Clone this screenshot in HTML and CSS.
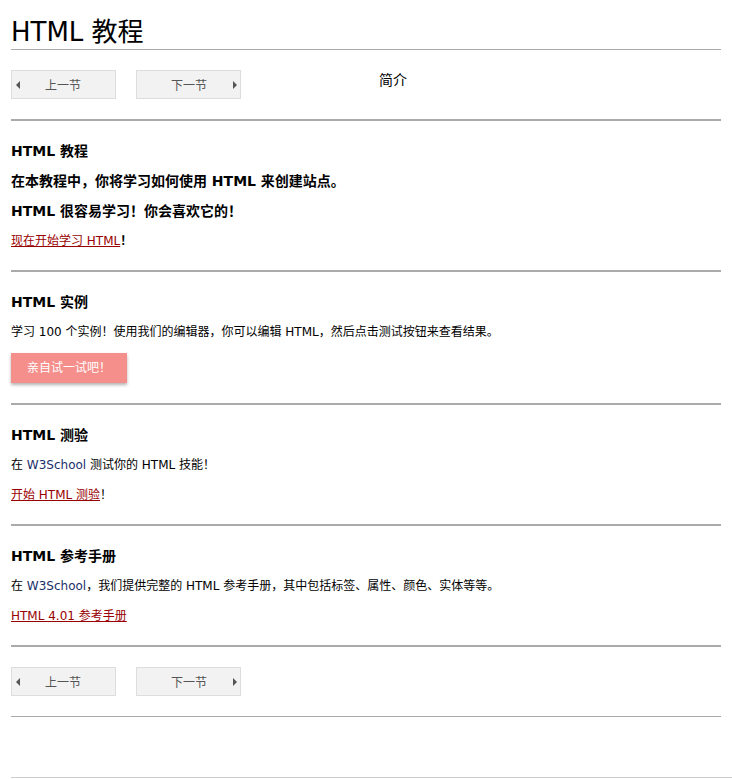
FILE: index.html
```html
<!DOCTYPE html>
<html lang="zh-CN">
<head>
<meta charset="utf-8">
<title>HTML 教程</title>
<link rel="stylesheet" href="styles.css">
</head>
<body>
<div class="page">
  <h1 class="title">HTML 教程</h1>

  <div class="nav">
    <a class="navbtn prev" href="#"><span class="tri tri-left"></span><span class="navtext">上一节</span></a>
    <a class="navbtn next" href="#"><span class="navtext">下一节</span><span class="tri tri-right"></span></a>
    <span class="intro">简介</span>
  </div>

  <hr class="rule">

  <div class="section">
    <h2 class="sect-title">HTML 教程</h2>
    <p class="strong">在本教程中，你将学习如何使用 HTML 来创建站点。</p>
    <p class="strong">HTML 很容易学习！你会喜欢它的！</p>
    <p><a class="link" href="#">现在开始学习 HTML</a><b>！</b></p>
  </div>

  <hr class="rule">

  <div class="section">
    <h2 class="sect-title">HTML 实例</h2>
    <p>学习 100 个实例！使用我们的编辑器，你可以编辑 HTML，然后点击测试按钮来查看结果。</p>
    <div><a class="tryit" href="#">亲自试一试吧！</a></div>
  </div>

  <hr class="rule">

  <div class="section">
    <h2 class="sect-title">HTML 测验</h2>
    <p>在 <span class="w3">W3School</span> 测试你的 HTML 技能！</p>
    <p><a class="link" href="#">开始 HTML 测验</a>！</p>
  </div>

  <hr class="rule">

  <div class="section">
    <h2 class="sect-title">HTML 参考手册</h2>
    <p>在 <span class="w3">W3School</span>，我们提供完整的 HTML 参考手册，其中包括标签、属性、颜色、实体等等。</p>
    <p><a class="link" href="#">HTML 4.01 参考手册</a></p>
  </div>

  <hr class="rule">

  <div class="nav nav-bottom">
    <a class="navbtn prev" href="#"><span class="tri tri-left"></span><span class="navtext">上一节</span></a>
    <a class="navbtn next" href="#"><span class="navtext">下一节</span><span class="tri tri-right"></span></a>
  </div>

  <hr class="rule thin">
</div>
<div class="footer"></div>
</body>
</html>
```

FILE: styles.css
```css
html, body {
  margin: 0;
  padding: 0;
  background: #fff;
}

body {
  font-family: "DejaVu Sans", Verdana, "Noto Sans CJK SC", sans-serif;
  font-size: 12px;
  color: #000;
}

.page {
  width: 710px;
  padding: 0 11px;
}

.title {
  margin: 17px 0 0;
  padding: 0 0 2px;
  font-size: 26px;
  font-weight: normal;
  line-height: 30px;
  border-bottom: 1px solid #aaa;
}

.nav {
  display: flex;
  align-items: center;
  margin: 20px 0;
}

.navbtn {
  position: relative;
  box-sizing: border-box;
  width: 105px;
  height: 29px;
  background: #f2f2f2;
  border: 1px solid #ddd;
  color: #555;
  text-decoration: none;
  display: flex;
  align-items: center;
}

.navbtn.next {
  margin-left: 20px;
}

.prev .navtext {
  margin-left: 25px;
}

.next .navtext {
  margin-left: 34px;
}

.tri {
  width: 0;
  height: 0;
  border-top: 4px solid transparent;
  border-bottom: 4px solid transparent;
}

.tri-left {
  margin-left: 4px;
  border-right: 4px solid #555;
}

.tri-right {
  margin-left: 26px;
  border-left: 4px solid #555;
}

.intro {
  margin-left: 138px;
  align-self: flex-start;
  margin-top: 1px;
  font-size: 14px;
  line-height: 18px;
}

.rule {
  margin: 0;
  border: 0;
  height: 2px;
  background: #aaa;
}

.rule.thin {
  height: 1px;
}

.section {
  display: flex;
  flex-direction: column;
  gap: 12px;
  padding: 21px 0 20px;
}

.sect-title {
  margin: 0;
  font-size: 14px;
  font-weight: bold;
  line-height: 18px;
}

.section p {
  margin: 0;
  line-height: 18px;
}

.section p.strong {
  font-size: 14px;
  font-weight: bold;
}

.link {
  color: #900;
  text-decoration: underline;
}

.w3 {
  color: #1a2f6b;
}

.tryit {
  display: inline-block;
  height: 30px;
  line-height: 30px;
  padding: 0 16px;
  background: #f58f8c;
  color: #fff;
  text-decoration: none;
  box-shadow: 0 2px 3px rgba(0, 0, 0, 0.3);
}

.nav-bottom {
  margin: 20px 0;
}

.footer {
  margin: 60px 0 0 11px;
  border-top: 1px solid #ccc;
  height: 10px;
}
```
